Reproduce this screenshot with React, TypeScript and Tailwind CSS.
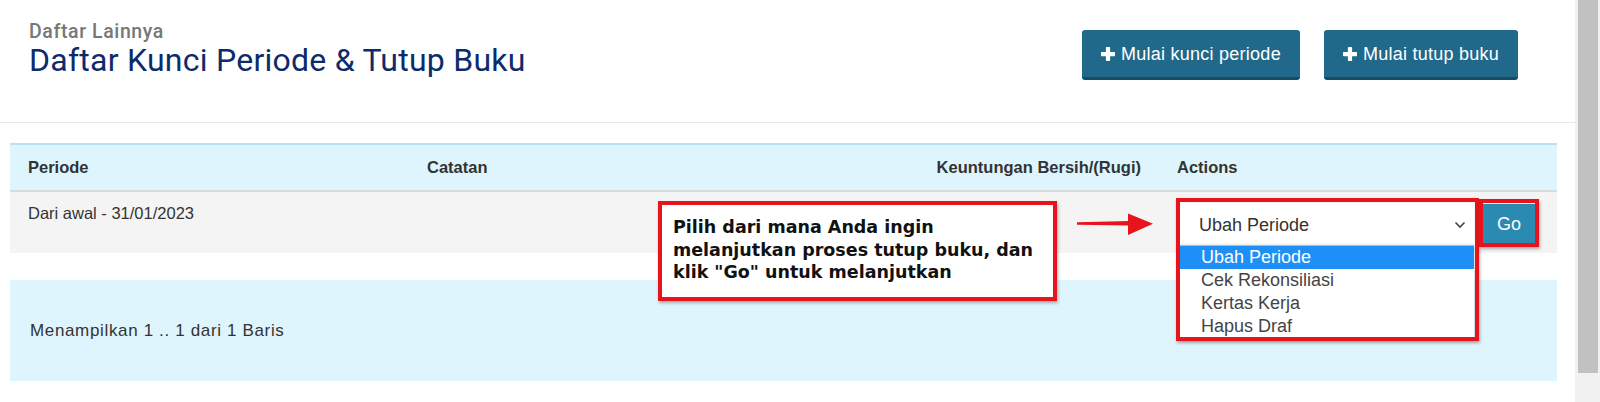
import React from "react";

function Plus() {
  return (
    <svg width="14" height="14" viewBox="0 0 14 14" className="shrink-0">
      <rect x="0" y="5" width="14" height="4.2" rx="0.8" fill="white" />
      <rect x="4.9" y="0" width="4.2" height="14" rx="0.8" fill="white" />
    </svg>
  );
}

function Btn({ label }: { label: string }) {
  return (
    <button className="flex items-center gap-[6px] h-[50px] px-[19px] pt-[1px] rounded-[3px] bg-[#21698a] border-b-[3px] border-[#154c66] text-white font-['Liberation_Sans',Arial,sans-serif] text-[18px] tracking-[0.25px] whitespace-nowrap">
      <Plus />
      <span>{label}</span>
    </button>
  );
}

export default function App() {
  const items = ["Ubah Periode", "Cek Rekonsiliasi", "Kertas Kerja", "Hapus Draf"];
  return (
    <div className="flex w-[1600px] h-[402px] overflow-hidden bg-white">
      <div className="relative w-[1575px] h-full">
        <header className="flex justify-between h-[123px] border-b border-[#e7e7e7]">
          <div className="pl-[29px] pt-[21px]">
            <div className="font-['Roboto',sans-serif] font-medium text-[19.5px] leading-[22px] text-[#777777] tracking-[0.6px]">
              Daftar Lainnya
            </div>
            <h1 className="font-['Roboto',sans-serif] text-[32px] leading-[34px] text-[#0d2b6b] tracking-[0.25px]">
              Daftar Kunci Periode &amp; Tutup Buku
            </h1>
          </div>
          <div className="flex items-start gap-[24px] pt-[30px] pr-[57px]">
            <Btn label="Mulai kunci periode" />
            <Btn label="Mulai tutup buku" />
          </div>
        </header>

        <div className="ml-[10px] mt-[20px] w-[1547px] font-['Liberation_Sans',Arial,sans-serif]">
          <div className="grid grid-cols-[399px_391px_359px_398px] items-center h-[49px] bg-[#dff5fd] border-t-2 border-b-2 border-t-[#b9dff0] border-b-[#dadada] text-[16.5px] font-bold text-[#333333]">
            <div className="pl-[18px]">Periode</div>
            <div className="pl-[18px]">Catatan</div>
            <div className="pr-[18px] text-right">Keuntungan Bersih/(Rugi)</div>
            <div className="pl-[18px]">Actions</div>
          </div>

          <div className="grid grid-cols-[399px_391px_359px_398px] items-start h-[61px] bg-[#f4f4f4] text-[16.5px] text-[#333333]">
            <div className="pl-[18px] pt-[11px] leading-[20px]">Dari awal - 31/01/2023</div>
            <div />
            <div />
            <div className="pl-[21px] pt-[11px] flex items-start">
              <div className="relative w-[294px] h-[41px] bg-white">
                <div className="flex items-center justify-between h-full pl-[19px] pr-[8px] text-[18px] text-[#333333] leading-[20px] pt-[2px]">
                  <span>Ubah Periode</span>
                  <svg width="12" height="8" viewBox="0 0 12 8">
                    <path d="M1.5 1.5 L6 6 L10.5 1.5" fill="none" stroke="#444" strokeWidth="1.6" />
                  </svg>
                </div>
                <div className="absolute left-0 top-[42px] w-[294px] bg-white border-t border-[#bdbdbd] z-20 shadow-[0_2px_4px_rgba(0,0,0,0.25)]">
                  {items.map((it, i) => (
                    <div
                      key={it}
                      className={
                        i === 0
                          ? "h-[23px] leading-[23px] pl-[21px] text-[18px] bg-[#1e8ff6] text-white"
                          : "h-[23px] leading-[23px] pl-[21px] text-[18px] text-[#444444]"
                      }
                    >
                      {it}
                    </div>
                  ))}
                </div>
                <div className="absolute left-[-4px] top-[-5px] right-[-5px] h-[143px] border-4 border-[#e8141c] z-30 shadow-[1px_2px_3px_rgba(0,0,0,0.3)]" />
              </div>
              <div className="relative ml-[9px] mt-[1px] w-[52px] h-[39px] bg-[#2b8ab1] text-white text-[18px] flex items-center justify-center">
                <span className="pt-[1px]">Go</span>
                <div className="absolute left-[-4px] top-[-5px] right-[-4px] bottom-[-4px] border-4 border-[#e8141c] z-30 shadow-[1px_2px_3px_rgba(0,0,0,0.3)]" />
              </div>
            </div>
          </div>

          <div className="mt-[27px] h-[101px] bg-[#dff5fd] flex items-center pl-[20px] text-[17px] tracking-[0.65px] text-[#333333]">
            Menampilkan 1 .. 1 dari 1 Baris
          </div>
        </div>

        <div className="absolute left-[658px] top-[201px] w-[399px] h-[100px] border-4 border-[#e8141c] bg-white z-10 pl-[11px] pt-[11px] font-['DejaVu_Sans',sans-serif] font-bold text-[17.5px] leading-[22.5px] text-[#111111] whitespace-nowrap shadow-[1px_2px_3px_rgba(0,0,0,0.3)]">
          Pilih dari mana Anda ingin
          <br />
          melanjutkan proses tutup buku, dan
          <br />
          klik "Go" untuk melanjutkan
        </div>

        <svg className="absolute left-[1070px] top-[208px] z-10" width="90" height="32" viewBox="0 0 90 32">
          <polygon points="7,14.2 60,13 60,17.6 7,16.8" fill="#e8141c" />
          <polygon points="58,5.5 83,15.8 58,27" fill="#e8141c" />
        </svg>
      </div>

      <div className="w-[25px] h-full bg-[#f1f1f1] pl-[3px] pr-[2px]">
        <div className="h-[373px] bg-[#c1c1c1]" />
      </div>
    </div>
  );
}
